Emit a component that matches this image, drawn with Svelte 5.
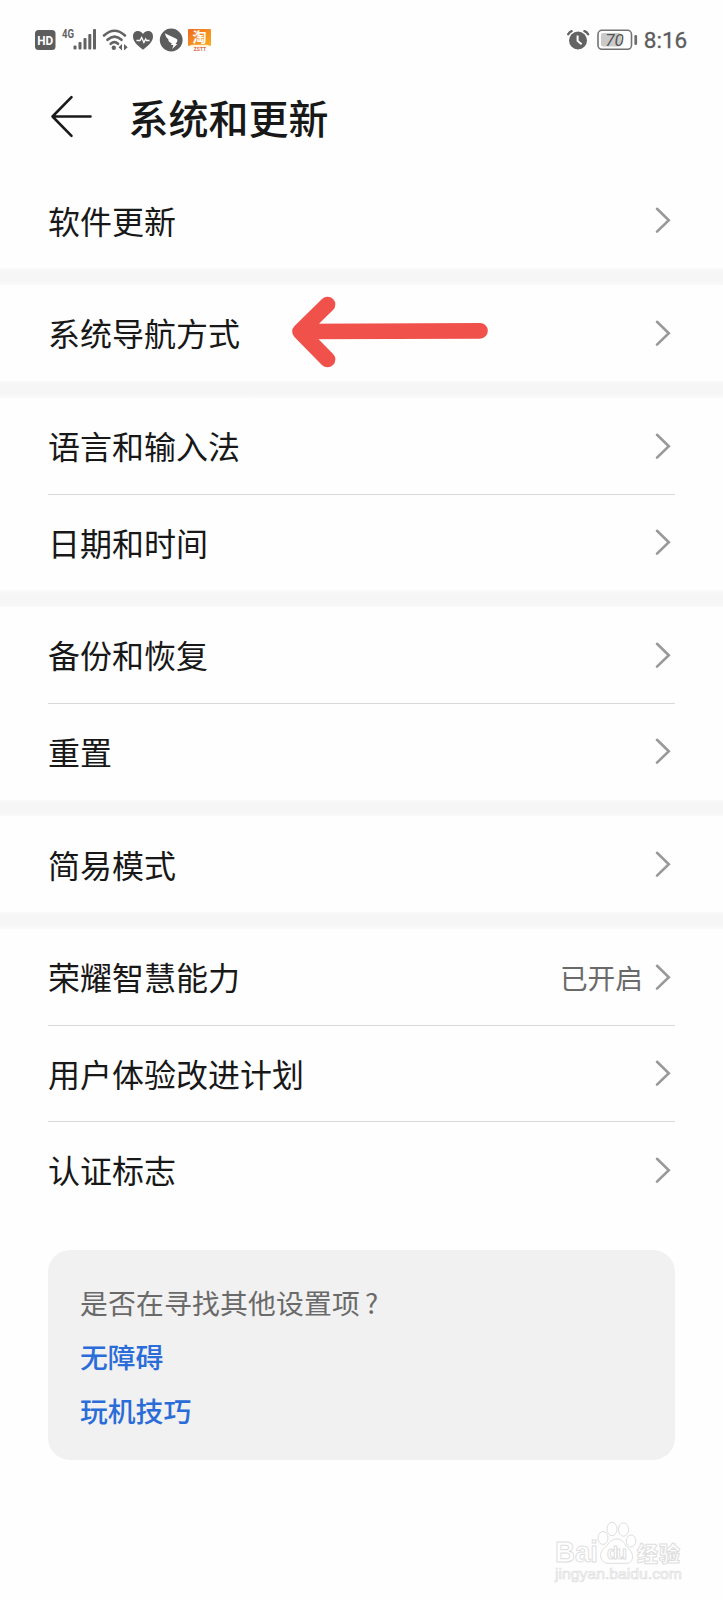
<script lang="ts">
	type Item = { label: string; value?: string };

	const groups: Item[][] = [
		[{ label: '软件更新' }],
		[{ label: '系统导航方式' }],
		[{ label: '语言和输入法' }, { label: '日期和时间' }],
		[{ label: '备份和恢复' }, { label: '重置' }],
		[{ label: '简易模式' }],
		[
			{ label: '荣耀智慧能力', value: '已开启' },
			{ label: '用户体验改进计划' },
			{ label: '认证标志' }
		]
	];
	const links = ['无障碍', '玩机技巧'];
</script>

<div class="screen">
	<div class="status">
		<svg class="icons" width="190" height="40" viewBox="0 0 190 40">
			<defs>
				<linearGradient id="tao" x1="0" y1="0" x2="1" y2="1">
					<stop offset="0" stop-color="#ef6a1c" />
					<stop offset="1" stop-color="#f9ae24" />
				</linearGradient>
			</defs>
			<rect x="10" y="10" width="20.5" height="20" rx="3.5" fill="#5d5d5d" />
			<text x="20.2" y="25" class="hd" textLength="16" lengthAdjust="spacingAndGlyphs">HD</text>
			<text x="37" y="18.2" class="net" textLength="12" lengthAdjust="spacingAndGlyphs">4G</text>
			<g fill="#636363">
				<rect x="48.5" y="25.5" width="3" height="4" rx="1" />
				<rect x="53.5" y="22" width="3" height="7.5" rx="1" />
				<rect x="58.5" y="18" width="3" height="11.5" rx="1" />
				<rect x="63.3" y="14" width="3" height="15.5" rx="1" />
				<rect x="68" y="9" width="3" height="20.5" rx="1" />
			</g>
			<g fill="none" stroke="#636363" stroke-width="2.6" stroke-linecap="round">
				<path d="M79 15.5Q89.5 6 100 15.5" />
				<path d="M82.5 19.8Q89.5 13.5 96.5 19.8" />
				<path d="M85.7 23.8Q89.5 20.6 93 23.8" />
			</g>
			<circle cx="88.8" cy="27.8" r="2.2" fill="#636363" />
			<path d="M97 24v6.5l-3.5-3.2zM99 24v6.5l3.7-3.2z" fill="#636363" />
			<path d="M118 29.8C113 25.5 108 22 108 16.4c0-6.2 7.3-7 10-2.3c2.7-4.7 10-3.9 10 2.3c0 5.6-5 9.1-10 13.4z" fill="#5d5d5d" />
			<path d="M111.5 20.5h3.5l1.6-3 2.3 5 1.8-3.5.8 1.5h3" fill="none" stroke="#fff" stroke-width="1.3" />
			<circle cx="146.2" cy="20" r="11.4" fill="#5d5d5d" />
			<path d="M139.8 13.2l11.5 5.5q1.7.9.9 2.7l-1.6 2.5h1.8l-5.2 5.2 1.2-4h-2.3l.6-1.8q-2.5-.7-3.1-2.3l-.3-1.8q-2-1.3-2.300-2.600z" fill="#fff" />
			<rect x="163" y="9" width="23" height="17" rx="1" fill="url(#tao)" />
			<text x="174.5" y="22" class="tao">淘</text>
			<path d="M164 25.7l3-1h15l3 1-3 1h-15z" fill="#fff3d6" />
			<text x="175" y="31" class="tiny">ZSTT</text>
		</svg>
		<svg class="power" width="140" height="40" viewBox="0 0 140 40">
			<g fill="none" stroke="#636363" stroke-width="2.4" stroke-linecap="round">
				<path d="M8.2 14.2Q9.3 12 11.6 11.2M24.4 11.2q2.5.8 3.7 3" />
			</g>
			<circle cx="18" cy="20.5" r="9" fill="#636363" />
			<path d="M17.6 15.5v5.4l4 3.3" fill="none" stroke="#fff" stroke-width="2" />
			<rect x="38" y="10.3" width="33.5" height="19" rx="4" fill="#fff" stroke="#737373" stroke-width="1.6" />
			<rect x="41" y="13" width="20" height="13.5" rx="2" fill="#cacaca" />
			<text x="54.5" y="25.8" class="level">70</text>
			<rect x="74.4" y="15" width="2.7" height="10" rx="1.2" fill="#6c6c6c" />
			<text x="83.8" y="27.8" class="time">8:16</text>
		</svg>
	</div>

	<header>
		<svg width="44" height="44" viewBox="0 0 44 44">
			<path d="M22.5 3.2L3.5 22.5l19 19.3M3.5 22.5h38" />
		</svg>
		<h1>系统和更新</h1>
	</header>

	<main>
		{#each groups as group}
			<section>
				{#each group as item}
					<div class="row">
						<span class="label">{item.label}</span>
						{#if item.value}
							<span class="value">{item.value}</span>
						{/if}
						<svg class="chevron" width="16" height="28" viewBox="0 0 16 28">
							<path d="M2 2.8l11.8 11.4L2 25.6" />
						</svg>
					</div>
				{/each}
			</section>
		{/each}
	</main>

	<div class="card">
		<p>是否在寻找其他设置项<span class="mark">?</span></p>
		{#each links as link}
			<span class="link">{link}</span>
		{/each}
	</div>

	<svg class="pointer" width="200" height="76" viewBox="0 0 200 76">
		<path d="M35.5 11.5L8 38.5l27.500 28M10 38.500L188 37.800" />
	</svg>

	<svg class="watermark" width="140" height="68" viewBox="0 0 140 68">
		<text x="1" y="43" class="brand" textLength="43" lengthAdjust="spacingAndGlyphs">Bai</text>
		<ellipse cx="49" cy="19" rx="5" ry="6.5" />
		<ellipse cx="58" cy="10" rx="5" ry="6.7" />
		<ellipse cx="69.5" cy="10.5" rx="5" ry="6.7" />
		<ellipse cx="77" cy="22" rx="4.8" ry="6" />
		<path d="M63 20c-7 0-9 6-13 9.5c-7 6-2 15 4 14.8h18c7 .2 9-8 3-14.3c-5-5-6-10-12-10z" />
		<text x="53" y="40" class="du" textLength="20">du</text>
		<text x="83" y="42" class="exp" textLength="43">经验</text>
		<text x="1" y="60" class="site" textLength="127" lengthAdjust="spacingAndGlyphs">jingyan.baidu.com</text>
	</svg>
</div>

<style>
	:global(body) {
		background: #fefefe;
	}
	.screen {
		position: relative;
		width: 723px;
		height: 1600px;
		overflow: hidden;
		background: #fefefe;
		font-family: 'Noto Sans CJK SC', sans-serif;
		color: #181818;
	}
	.status {
		display: flex;
		justify-content: space-between;
		height: 40px;
		padding: 20px 23px 0 25px;
	}
	.hd {
		font: bold 13px Roboto, sans-serif;
		fill: #fff;
		text-anchor: middle;
	}
	.net {
		font: bold 12px Roboto, sans-serif;
		fill: #636363;
	}
	.tao {
		font: bold 14px 'Noto Sans CJK SC', sans-serif;
		fill: #fff;
		text-anchor: middle;
	}
	.tiny {
		font: bold 5px Roboto, sans-serif;
		fill: #e06a4c;
		text-anchor: middle;
	}
	.level {
		font: italic 17px Roboto, sans-serif;
		fill: #555;
		text-anchor: middle;
	}
	.time {
		font: 22.5px Roboto, sans-serif;
		fill: #5c5c5c;
		stroke: #5c5c5c;
		stroke-width: 0.3px;
	}
	header {
		display: flex;
		align-items: center;
		gap: 35.5px;
		height: 112px;
		padding-left: 49px;
	}
	header path {
		fill: none;
		stroke: #1a1a1a;
		stroke-width: 2.6;
		stroke-linecap: round;
		stroke-linejoin: round;
	}
	h1 {
		margin: 1px 0 0;
		font-size: 40px;
		font-weight: 500;
		line-height: 60px;
	}
	section + section::before {
		content: '';
		display: block;
		height: 16.4px;
		background: linear-gradient(#fafafa, #f6f6f6 25%, #f6f6f6 75%, #fafafa);
	}
	.row {
		display: flex;
		align-items: center;
		position: relative;
		height: 96.4px;
		padding: 0 52px 0 48px;
	}
	.row + .row::before {
		content: '';
		position: absolute;
		top: 0;
		left: 48px;
		right: 48px;
		height: 1px;
		background: #d9d9d9;
	}
	.label {
		flex: 1;
		padding-bottom: 1px;
		font-size: 32px;
		line-height: 48px;
	}
	.value {
		margin-right: 12px;
		font-size: 27.7px;
		line-height: 40px;
		color: #6a6a6a;
	}
	.chevron path {
		fill: none;
		stroke: #999;
		stroke-width: 2.6;
		stroke-linecap: round;
	}
	.card {
		display: flex;
		flex-direction: column;
		box-sizing: border-box;
		height: 210px;
		margin: 32.5px 48px 0;
		padding: 24.5px 32px;
		border-radius: 22px;
		background: #f1f1f1;
		font-size: 27.8px;
		line-height: 54px;
	}
	.card p {
		margin: 0;
		letter-spacing: 0.2px;
		color: #6a6a6a;
	}
	.mark {
		margin-left: 5px;
	}
	.link {
		font-weight: 500;
		color: #2a6cd8;
	}
	.pointer {
		position: absolute;
		left: 292px;
		top: 293px;
	}
	.pointer path {
		fill: none;
		stroke: #f0524b;
		stroke-width: 15.7;
		stroke-linecap: round;
		stroke-linejoin: round;
	}
	.watermark {
		position: absolute;
		left: 554px;
		top: 1519px;
		fill: #fff;
		stroke: #dedede;
		stroke-width: 1;
	}
	.brand {
		font: bold 30px 'Liberation Sans', sans-serif;
	}
	.du {
		font: bold 18px 'Liberation Sans', sans-serif;
	}
	.exp {
		font: 900 21px 'Noto Sans CJK SC', sans-serif;
	}
	.site {
		font: 14.5px 'Liberation Sans', sans-serif;
		stroke-width: 0.7;
	}
</style>
